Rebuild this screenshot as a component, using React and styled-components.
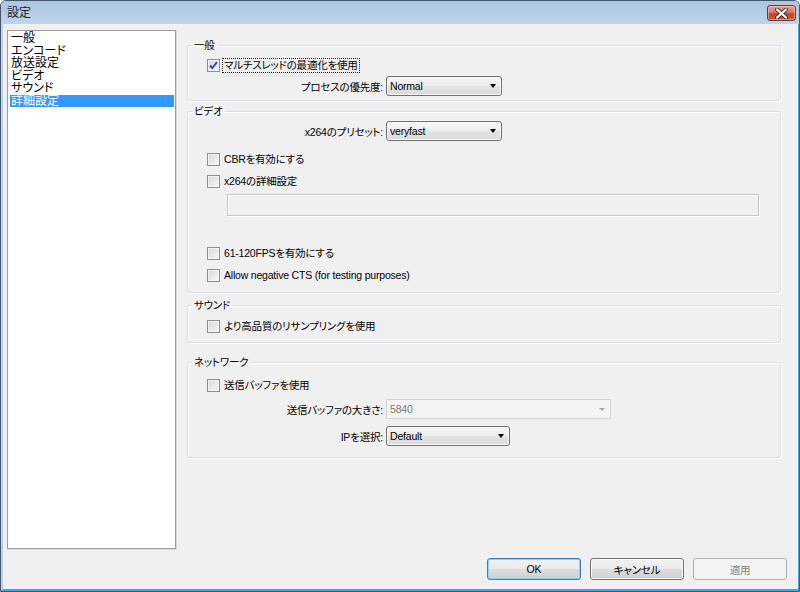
import styled, { createGlobalStyle } from "styled-components";

const GlobalStyle = createGlobalStyle`
  html, body {
    margin: 0;
    padding: 0;
    background: #ffffff;
  }
  body {
    font-family: "Liberation Sans", "Noto Sans CJK JP", sans-serif;
    font-size: 10.5px;
    letter-spacing: -0.2px;
    color: #000;
    font-feature-settings: "palt";
  }
  * { box-sizing: border-box; }
`;

const categories = ["一般", "エンコード", "放送設定", "ビデオ", "サウンド", "詳細設定"];

export default function App() {
  return (
    <>
      <GlobalStyle />
      <Window>
        <TitleBar>
          <Title>設定</Title>
          <CloseButton aria-label="close">
            <svg width="13" height="11" viewBox="0 0 13 11">
              <path d="M2 1.5 L11 9.5 M11 1.5 L2 9.5" stroke="#4a2a25" strokeWidth="4" strokeLinecap="round" />
              <path d="M2 1.5 L11 9.5 M11 1.5 L2 9.5" stroke="#ffffff" strokeWidth="2.2" strokeLinecap="round" />
            </svg>
          </CloseButton>
        </TitleBar>
        <Client>
          <Main>
            <Sidebar>
              {categories.map((c, i) => (
                <ListItem key={c} $selected={i === categories.length - 1}>{c}</ListItem>
              ))}
            </Sidebar>
            <Panel>
              <Group $pb={4}>
                <Legend>一般</Legend>
                <CheckRow $mt={6}>
                  <CheckBox checked />
                  <CheckLabel $focused>マルチスレッドの最適化を使用</CheckLabel>
                </CheckRow>
                <FieldRow $mt={3}>
                  <FieldLabel>プロセスの優先度:</FieldLabel>
                  <Combo $width={116}>Normal<Arrow /></Combo>
                </FieldRow>
              </Group>

              <Group $mt={4} $pb={9}>
                <Legend>ビデオ</Legend>
                <FieldRow $mt={4}>
                  <FieldLabel>x264のプリセット:</FieldLabel>
                  <Combo $width={116}>veryfast<Arrow /></Combo>
                </FieldRow>
                <CheckRow $mt={10}>
                  <CheckBox />
                  <CheckLabel>CBRを有効にする</CheckLabel>
                </CheckRow>
                <CheckRow $mt={6}>
                  <CheckBox />
                  <CheckLabel>x264の詳細設定</CheckLabel>
                </CheckRow>
                <TextBox />
                <CheckRow $mt={29}>
                  <CheckBox />
                  <CheckLabel>61-120FPSを有効にする</CheckLabel>
                </CheckRow>
                <CheckRow $mt={6}>
                  <CheckBox />
                  <CheckLabel>Allow negative CTS (for testing purposes)</CheckLabel>
                </CheckRow>
              </Group>

              <Group $mt={6} $pb={8}>
                <Legend>サウンド</Legend>
                <CheckRow $mt={7}>
                  <CheckBox />
                  <CheckLabel>より高品質のリサンプリングを使用</CheckLabel>
                </CheckRow>
              </Group>

              <Group $mt={13} $pb={11}>
                <Legend>ネットワーク</Legend>
                <CheckRow $mt={9}>
                  <CheckBox />
                  <CheckLabel>送信バッファを使用</CheckLabel>
                </CheckRow>
                <FieldRow $mt={6}>
                  <FieldLabel>送信バッファの大きさ:</FieldLabel>
                  <Combo $width={225} $disabled>5840<Arrow $disabled /></Combo>
                </FieldRow>
                <FieldRow $mt={7}>
                  <FieldLabel>IPを選択:</FieldLabel>
                  <Combo $width={124}>Default<Arrow /></Combo>
                </FieldRow>
              </Group>
            </Panel>
          </Main>
          <Footer>
            <Button $variant="default">OK</Button>
            <Button>キャンセル</Button>
            <Button $variant="disabled">適用</Button>
          </Footer>
        </Client>
      </Window>
    </>
  );
}

const CheckBox = ({ checked }) => (
  <Box>
    {checked && (
      <svg width="11" height="11" viewBox="0 0 11 11">
        <path d="M2 5.5 L4.3 8 L9 2.2" fill="none" stroke="#2c4a9e" strokeWidth="1.9" />
      </svg>
    )}
  </Box>
);

const Window = styled.div`
  width: 800px;
  height: 592px;
  display: flex;
  flex-direction: column;
  border: 1px solid #47566a;
  border-radius: 6px 6px 0 0;
  overflow: hidden;
  background: #b9cfe8;
`;

const TitleBar = styled.div`
  height: 23px;
  display: flex;
  align-items: center;
  justify-content: space-between;
  padding: 0 3px 2px 6px;
  background: linear-gradient(180deg, #acc5e2 0%, #b8cee8 60%, #bfd4ec 100%);
`;

const Title = styled.span`
  font-size: 12px;
  letter-spacing: 0;
  color: #1b1b1b;
`;

const CloseButton = styled.div`
  width: 29px;
  height: 16px;
  margin-top: 3px;
  display: flex;
  align-items: center;
  justify-content: center;
  border: 1px solid #6b3a31;
  border-radius: 3px;
  background: linear-gradient(180deg, #e6a597 0%, #d47a66 45%, #c2452b 55%, #c75a3c 100%);
  box-shadow: inset 0 0 0 1px rgba(255, 210, 200, 0.5);
`;

const Client = styled.div`
  flex: 1;
  display: flex;
  flex-direction: column;
  background: #f0f0f0;
  border-left: 2px solid #bcd1ea;
  border-right: 1px solid #3da7de;
  border-bottom: 2px solid #3da7de;
`;

const Main = styled.div`
  flex: 1;
  display: flex;
  gap: 11px;
  padding: 6px 17px 0 4px;
`;

const Sidebar = styled.div`
  width: 169px;
  background: #ffffff;
  border: 1px solid #9d9d9d;
  box-shadow: 1px 1px 0 #dadada;
  padding: 1px 1px 0 2px;
  font-size: 12px;
  letter-spacing: 0;
`;

const ListItem = styled.div`
  height: 12.5px;
  line-height: 12.5px;
  padding-left: 1px;
  white-space: nowrap;
  background: ${(p) => (p.$selected ? "#3399ff" : "transparent")};
  color: ${(p) => (p.$selected ? "#ffffff" : "#000000")};
`;

const Panel = styled.div`
  flex: 1;
  display: flex;
  flex-direction: column;
  padding-top: 9px;
`;

const Group = styled.fieldset`
  margin: ${(p) => p.$mt || 0}px 0 0 0;
  padding: 0 0 ${(p) => p.$pb || 0}px 0;
  min-width: 0;
  border: 1px solid #d5dfe5;
  border-radius: 3px;
  box-shadow: 1px 1px 0 #ffffff, inset 1px 1px 0 #ffffff;
  display: flex;
  flex-direction: column;
`;

const Legend = styled.legend`
  margin-left: 4px;
  padding: 0 2px;
  height: 12px;
  line-height: 12px;
`;

const CheckRow = styled.div`
  margin-top: ${(p) => p.$mt || 0}px;
  height: 16px;
  display: flex;
  align-items: center;
  gap: 2px;
  padding-left: 19px;
`;

const Box = styled.span`
  width: 13px;
  height: 13px;
  flex: none;
  display: flex;
  align-items: center;
  justify-content: center;
  border: 1px solid #8e8f8f;
  background: linear-gradient(135deg, #d2d5d9 0%, #e9eaec 55%, #f8f8f8 100%);
  box-shadow: inset 0 0 0 1px #f4f4f4;
`;

const CheckLabel = styled.span`
  height: 15px;
  line-height: 13px;
  padding: 0 1px;
  white-space: nowrap;
  border: 1px dotted ${(p) => (p.$focused ? "#222" : "transparent")};
`;

const FieldRow = styled.div`
  margin-top: ${(p) => p.$mt || 0}px;
  display: grid;
  grid-template-columns: 195px auto;
  align-items: center;
  column-gap: 3px;
  justify-content: start;
`;

const FieldLabel = styled.span`
  text-align: right;
  white-space: nowrap;
`;

const Combo = styled.div`
  position: relative;
  width: ${(p) => p.$width}px;
  height: 20px;
  line-height: 18px;
  padding-left: 3px;
  border: 1px solid ${(p) => (p.$disabled ? "#d3d3d3" : "#707070")};
  border-radius: ${(p) => (p.$disabled ? 1 : 3)}px;
  color: ${(p) => (p.$disabled ? "#7a7a7a" : "#000")};
  background: ${(p) =>
    p.$disabled
      ? "#f4f4f4"
      : "linear-gradient(180deg, #f6f6f6 0%, #eeeeee 50%, #e4e4e4 51%, #dadada 100%)"};
  box-shadow: ${(p) => (p.$disabled ? "none" : "inset 0 0 0 1px #fbfbfb")};
`;

const Arrow = styled.span`
  position: absolute;
  right: 5px;
  top: 7px;
  width: 0;
  height: 0;
  border-left: ${(p) => (p.$disabled ? 3 : 3.5)}px solid transparent;
  border-right: ${(p) => (p.$disabled ? 3 : 3.5)}px solid transparent;
  border-top: ${(p) => (p.$disabled ? 3 : 4)}px solid ${(p) => (p.$disabled ? "#a8a8a8" : "#000")};
  margin-top: ${(p) => (p.$disabled ? 1 : 0)}px;
`;

const TextBox = styled.div`
  margin: 5px 21px 0 39px;
  height: 22px;
  border: 1px solid #c5c5c5;
  background: #f0f0f0;
  box-shadow: inset 1px 1px 0 #ffffff, 1px 1px 0 #ffffff;
`;

const Footer = styled.div`
  display: flex;
  justify-content: flex-end;
  gap: 9px;
  padding: 9px 11px 9px 0;
`;

const Button = styled.div`
  width: 94px;
  height: 22px;
  display: flex;
  align-items: center;
  justify-content: center;
  border-radius: 3px;
  border: 1px solid
    ${(p) => (p.$variant === "default" ? "#3c7fb1" : p.$variant === "disabled" ? "#adb2b5" : "#707070")};
  color: ${(p) => (p.$variant === "disabled" ? "#838383" : "#000")};
  background: ${(p) =>
    p.$variant === "disabled"
      ? "#f4f4f4"
      : "linear-gradient(180deg, #f2f2f2 0%, #ebebeb 50%, #dddddd 51%, #cfcfcf 100%)"};
  box-shadow: ${(p) =>
    p.$variant === "default"
      ? "inset 0 0 0 1px #8ed1f6"
      : p.$variant === "disabled"
      ? "none"
      : "inset 0 0 0 1px #fcfcfc"};
`;
